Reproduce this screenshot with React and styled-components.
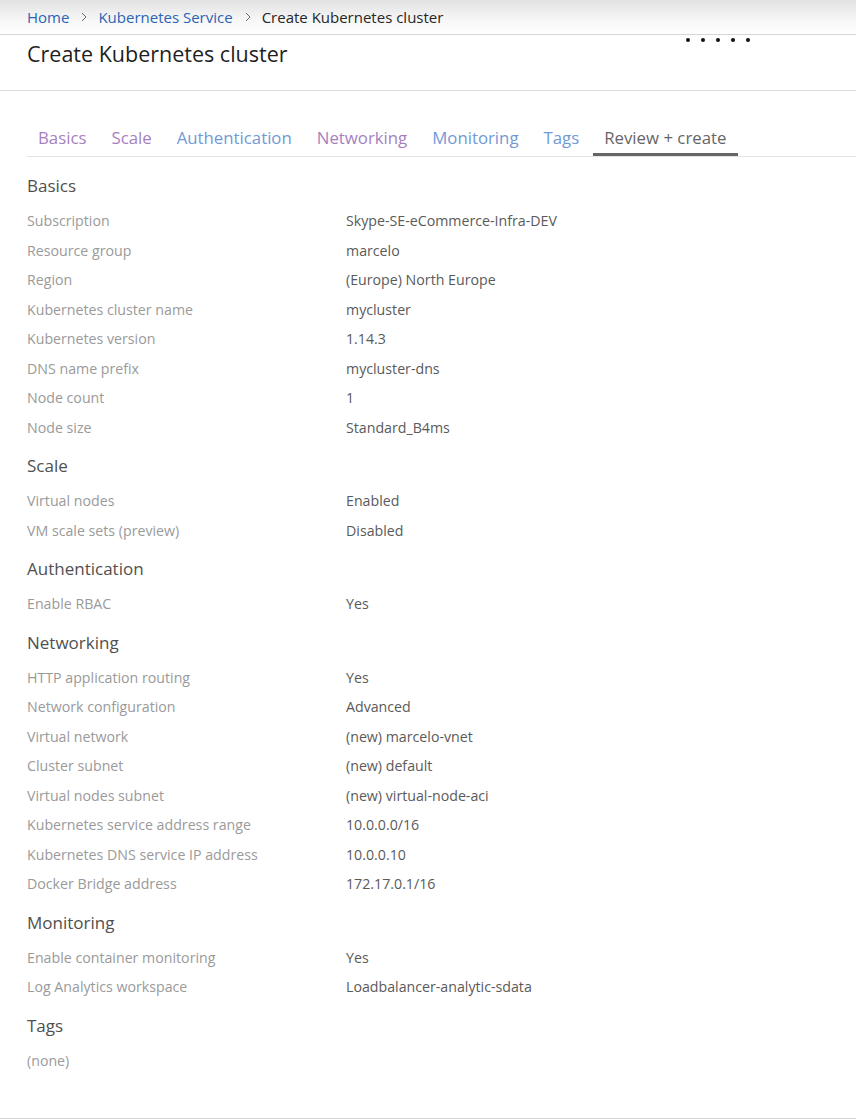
import React from "react";
import styled, { createGlobalStyle } from "styled-components";

const GlobalStyle = createGlobalStyle`
  html, body {
    margin: 0;
    padding: 0;
    background: #ffffff;
  }
  body {
    font-family: "Open Sans", "Noto Sans", sans-serif;
  }
`;

const Page = styled.div`
  min-height: 1119px;
  box-sizing: border-box;
  border-bottom: 1px solid #d4d4d4;
`;

const Breadcrumb = styled.nav`
  height: 34px;
  display: flex;
  align-items: center;
  padding-left: 27px;
  background: linear-gradient(#e2e2e2, #f7f7f7 60%, #ffffff);
  border-bottom: 1px solid #d6d6d6;
  font-size: 15px;
  .crumb {
    color: #2a64b5;
  }
  .crumb--current {
    color: #262626;
  }
  svg {
    margin: 0 11px 0 12px;
  }
`;

const TitleBar = styled.header`
  height: 55px;
  display: flex;
  padding-left: 27px;
  border-bottom: 1px solid #dcdcdc;
  h1 {
    margin: 5px 0 0;
    font-size: 21.5px;
    line-height: 28px;
    font-weight: 400;
    color: #1f1f1f;
  }
`;

const Dots = styled.div`
  display: flex;
  gap: 11px;
  margin: 3px 0 0 auto;
  padding-right: 106px;
  span {
    width: 4px;
    height: 4px;
    border-radius: 50%;
    background: #111;
  }
`;

const Tabs = styled.div`
  display: flex;
  margin: 35px 0 0 27px;
  border-bottom: 1px solid #e4e4e4;
`;

const Tab = styled.div`
  padding: 0 12px 3px 11px;
  line-height: 24px;
  font-size: 16.8px;
  color: ${(p) => (p.$active ? "#666666" : p.$visited ? "#a77fc0" : "#7199d6")};
  border-bottom: 3px solid ${(p) => (p.$active ? "#666666" : "transparent")};
  margin-right: 2px;
`;

const Content = styled.main`
  padding: 17px 0 0 27px;
`;

const Section = styled.section`
  & + & {
    margin-top: 12px;
  }
  h2 {
    margin: 0 0 8px;
    font-size: 17px;
    line-height: 24px;
    font-weight: 400;
    color: #505050;
  }
`;

const Row = styled.div`
  display: grid;
  grid-template-columns: 319px 1fr;
  height: 29.5px;
  align-items: center;
  font-size: 14.2px;
  .label {
    color: #9a9a9a;
  }
  .value {
    color: #5a5a5a;
  }
`;

const Chevron = () => (
  <svg width="6" height="10" viewBox="0 0 6 10">
    <path d="M1 1l4 4-4 4" fill="none" stroke="#6a6a6a" strokeWidth="1" />
  </svg>
);

const sections = [
  {
    title: "Basics",
    rows: [
      ["Subscription", "Skype-SE-eCommerce-Infra-DEV"],
      ["Resource group", "marcelo"],
      ["Region", "(Europe) North Europe"],
      ["Kubernetes cluster name", "mycluster"],
      ["Kubernetes version", "1.14.3"],
      ["DNS name prefix", "mycluster-dns"],
      ["Node count", "1"],
      ["Node size", "Standard_B4ms"],
    ],
  },
  {
    title: "Scale",
    rows: [
      ["Virtual nodes", "Enabled"],
      ["VM scale sets (preview)", "Disabled"],
    ],
  },
  {
    title: "Authentication",
    rows: [["Enable RBAC", "Yes"]],
  },
  {
    title: "Networking",
    rows: [
      ["HTTP application routing", "Yes"],
      ["Network configuration", "Advanced"],
      ["Virtual network", "(new) marcelo-vnet"],
      ["Cluster subnet", "(new) default"],
      ["Virtual nodes subnet", "(new) virtual-node-aci"],
      ["Kubernetes service address range", "10.0.0.0/16"],
      ["Kubernetes DNS service IP address", "10.0.0.10"],
      ["Docker Bridge address", "172.17.0.1/16"],
    ],
  },
  {
    title: "Monitoring",
    rows: [
      ["Enable container monitoring", "Yes"],
      ["Log Analytics workspace", "Loadbalancer-analytic-sdata"],
    ],
  },
  {
    title: "Tags",
    rows: [["(none)", ""]],
  },
];

const tabs = [
  { name: "Basics", visited: true },
  { name: "Scale", visited: true },
  { name: "Authentication" },
  { name: "Networking", visited: true },
  { name: "Monitoring" },
  { name: "Tags" },
  { name: "Review + create", active: true },
];

const App = () => {
  return (
    <Page>
      <GlobalStyle />
      <Breadcrumb>
        <span className="crumb">Home</span>
        <Chevron />
        <span className="crumb">Kubernetes Service</span>
        <Chevron />
        <span className="crumb--current">Create Kubernetes cluster</span>
      </Breadcrumb>
      <TitleBar>
        <h1>Create Kubernetes cluster</h1>
        <Dots>
          <span />
          <span />
          <span />
          <span />
          <span />
        </Dots>
      </TitleBar>
      <Tabs>
        {tabs.map((tab) => (
          <Tab key={tab.name} $active={tab.active} $visited={tab.visited}>
            {tab.name}
          </Tab>
        ))}
      </Tabs>
      <Content>
        {sections.map((section) => (
          <Section key={section.title}>
            <h2>{section.title}</h2>
            {section.rows.map(([label, value]) => (
              <Row key={label}>
                <span className="label">{label}</span>
                <span className="value">{value}</span>
              </Row>
            ))}
          </Section>
        ))}
      </Content>
    </Page>
  );
};

export default App;
